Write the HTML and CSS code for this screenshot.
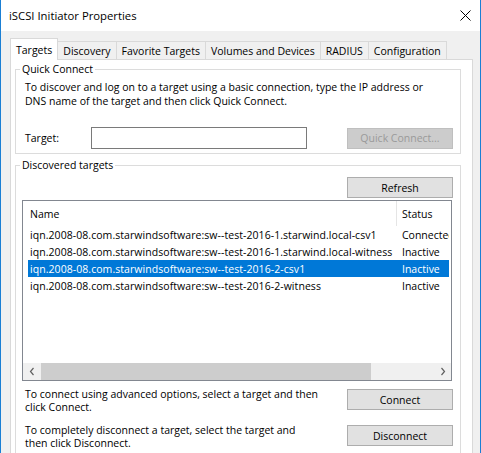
FILE: index.html
```html
<!DOCTYPE html>
<html lang="en">
<head>
<meta charset="utf-8">
<title>iSCSI Initiator Properties</title>
<link rel="stylesheet" href="styles.css">
</head>
<body>
<div class="window">
  <div class="titlebar">
    <span class="title">iSCSI Initiator Properties</span>
    <svg class="close" width="11" height="11" viewBox="0 0 11 11" aria-label="Close">
      <path d="M0.5 0.5L10.5 10.5M10.5 0.5L0.5 10.5" stroke="#000" stroke-width="1" fill="none"/>
    </svg>
  </div>

  <div class="client">
    <div class="tabs">
      <div class="tab active">Targets</div>
      <div class="tab">Discovery</div>
      <div class="tab">Favorite Targets</div>
      <div class="tab">Volumes and Devices</div>
      <div class="tab">RADIUS</div>
      <div class="tab">Configuration</div>
    </div>

    <div class="panel">
      <fieldset class="group">
        <legend>Quick Connect</legend>
        <p class="note">To discover and log on to a target using a basic connection, type the IP address or<br>DNS name of the target and then click Quick Connect.</p>
        <div class="target-row">
          <label class="target-label" for="target">Target:</label>
          <input class="field" id="target" type="text">
          <button class="btn" disabled>Quick Connect...</button>
        </div>
      </fieldset>

      <fieldset class="group discovered">
        <legend>Discovered targets</legend>
        <div class="toolbar">
          <button class="btn">Refresh</button>
        </div>

        <div class="list">
          <div class="list-head">
            <div class="head-name">Name</div>
            <div class="head-status">Status</div>
          </div>
          <div class="list-body">
            <div class="row"><span class="cell-name">iqn.2008-08.com.starwindsoftware:sw--test-2016-1.starwind.local-csv1</span><span class="cell-status">Connected</span></div>
            <div class="row"><span class="cell-name">iqn.2008-08.com.starwindsoftware:sw--test-2016-1.starwind.local-witness</span><span class="cell-status">Inactive</span></div>
            <div class="row selected"><span class="cell-name">iqn.2008-08.com.starwindsoftware:sw--test-2016-2-csv1</span><span class="cell-status">Inactive</span></div>
            <div class="row"><span class="cell-name">iqn.2008-08.com.starwindsoftware:sw--test-2016-2-witness</span><span class="cell-status">Inactive</span></div>
          </div>
          <div class="hscroll">
            <div class="arrow">
              <svg width="6" height="9" viewBox="0 0 6 9"><path d="M4.5 1L1.5 4.5L4.5 8" stroke="#606060" stroke-width="1.2" fill="none"/></svg>
            </div>
            <div class="thumb"></div>
            <div class="arrow arrow-end">
              <svg width="6" height="9" viewBox="0 0 6 9"><path d="M1.5 1L4.5 4.5L1.5 8" stroke="#606060" stroke-width="1.2" fill="none"/></svg>
            </div>
          </div>
        </div>

        <div class="action">
          <p class="action-text">To connect using advanced options, select a target and then<br>click Connect.</p>
          <button class="btn">Connect</button>
        </div>
        <div class="action action-second">
          <p class="action-text">To completely disconnect a target, select the target and<br>then click Disconnect.</p>
          <button class="btn">Disconnect</button>
        </div>
      </fieldset>
    </div>
  </div>
</div>
</body>
</html>
```

FILE: styles.css
```css
* {
  box-sizing: border-box;
}

html,
body {
  margin: 0;
  padding: 0;
}

body {
  width: 481px;
  height: 453px;
  overflow: hidden;
  background: #fff;
  color: #000;
  font-family: "Open Sans", "Noto Sans", "Liberation Sans", sans-serif;
  font-size: 10.5px;
}

/* Dialog frame */
.window {
  width: 481px;
  height: 453px;
  display: flex;
  flex-direction: column;
  background: #f0f0f0;
  border-left: 1px solid #1a7fd4;
  border-right: 1px solid #1a7fd4;
  overflow: hidden;
}

.titlebar {
  flex: none;
  height: 31px;
  display: flex;
  align-items: center;
  justify-content: space-between;
  padding: 0 9px 0 8px;
  background: #fff;
}

.title {
  font-size: 11.3px;
  line-height: 15px;
}

.close {
  display: block;
}

.client {
  flex: 1;
  min-height: 0;
  display: flex;
  flex-direction: column;
  padding: 7px 7px 0 9px;
}

/* Tab strip */
.tabs {
  flex: none;
  height: 21px;
  display: flex;
  align-items: flex-end;
}

.tab {
  height: 18px;
  display: flex;
  align-items: center;
  padding: 0 5px;
  margin-left: -1px;
  background: #f0f0f0;
  border: 1px solid #d9d9d9;
  border-bottom: none;
  white-space: nowrap;
}

.tab:first-child {
  margin-left: 0;
}

.tab.active {
  height: 22px;
  margin-bottom: -1px;
  background: #fff;
  position: relative;
  z-index: 1;
}

.panel {
  flex: 1;
  min-height: 0;
  overflow: hidden;
  padding: 0 11px 0 4px;
  background: #fff;
  border: 1px solid #d9d9d9;
  border-bottom: none;
}

/* Group boxes */
.group {
  min-width: 0;
  margin: 2px 0 0;
  padding: 0 7px 4px 9px;
  border: 1px solid #dcdcdc;
}

.group legend {
  margin-left: -5px;
  padding: 0 2px;
  line-height: 15px;
}

.discovered {
  margin-top: 4px;
  padding-bottom: 12px;
}

.note {
  margin: 3px 0 0;
  line-height: 14px;
}

.target-row {
  height: 22px;
  margin-top: 19px;
  display: flex;
  align-items: center;
}

.target-label {
  width: 66px;
  flex: none;
}

.field {
  width: 216px;
  height: 22px;
  margin: 0;
  padding: 0 3px;
  border: 1px solid #7a7a7a;
  background: #fff;
  font: inherit;
  outline: none;
}

/* Push buttons */
.btn {
  flex: none;
  width: 106px;
  height: 21px;
  margin: 0 0 0 auto;
  padding: 0;
  background: #e1e1e1;
  border: 1px solid #adadad;
  border-radius: 0;
  color: #000;
  font: inherit;
}

.btn:disabled {
  background: #cccccc;
  border-color: #bfbfbf;
  color: #9a9a9a;
}

.toolbar {
  display: flex;
  justify-content: flex-end;
  margin-top: 4px;
}

/* Target list view */
.list {
  height: 181px;
  margin: 2px 1px 0 -3px;
  display: flex;
  flex-direction: column;
  background: #fff;
  border: 1px solid #828790;
  overflow: hidden;
}

.list-head {
  flex: none;
  height: 25px;
  display: flex;
  align-items: center;
}

.head-name {
  width: 374px;
  height: 100%;
  display: flex;
  align-items: center;
  padding-left: 7px;
  border-right: 1px solid #e5e5e5;
}

.head-status {
  padding-left: 5px;
}

.list-body {
  flex: 1;
  min-height: 0;
  padding-left: 5px;
  overflow: hidden;
}

.row {
  width: 421px;
  height: 17px;
  display: flex;
  align-items: center;
  white-space: nowrap;
}

.row.selected {
  background: #0078d7;
  color: #fff;
}

.cell-name {
  width: 369px;
  flex: none;
  padding-left: 2px;
  overflow: hidden;
  letter-spacing: 0.06px;
}

.cell-status {
  width: 52px;
  flex: none;
  padding-left: 5px;
  overflow: hidden;
}

.hscroll {
  flex: none;
  height: 17px;
  display: flex;
  background: #f0f0f0;
}

.arrow {
  width: 17px;
  flex: none;
  display: flex;
  align-items: center;
  justify-content: center;
}

.arrow-end {
  margin-left: auto;
}

.thumb {
  width: 330px;
  margin-left: 1px;
  background: #cdcdcd;
}

/* Connect / disconnect rows */
.action {
  display: flex;
  align-items: flex-start;
  margin-top: 8px;
}

.action-second {
  margin-top: 11px;
}

.action-text {
  margin: -1px 0 0;
  line-height: 13px;
}
```
